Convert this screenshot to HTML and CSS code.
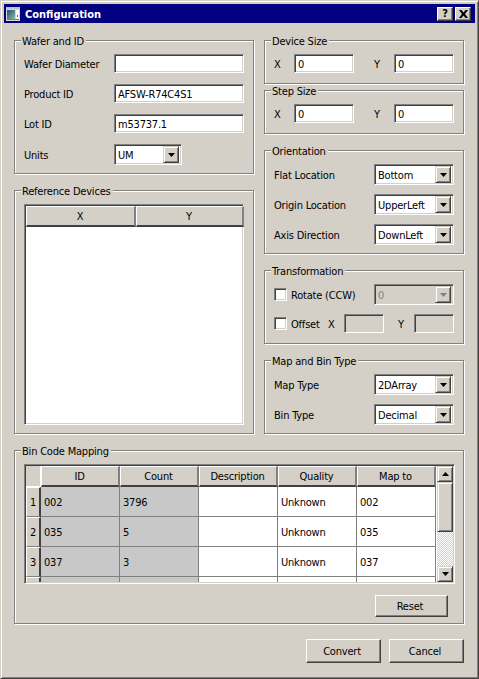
FILE: index.html
```html
<!DOCTYPE html>
<html lang="en">
<head>
<meta charset="utf-8">
<title>Configuration</title>
<link rel="stylesheet" href="styles.css">
</head>
<body>
<div class="window">
  <header class="titlebar">
    <svg class="app-icon" width="14" height="14" viewBox="0 0 14 14"><defs><linearGradient id="pic" x1="0" y1="0" x2="1" y2="1"><stop offset="0" stop-color="#1f4f72"/><stop offset="1" stop-color="#8fb8a8"/></linearGradient></defs><rect width="14" height="14" fill="#d8d8d8"/><rect x="0" y="0" width="14" height="2" fill="#b8c4cc"/><rect x="1" y="3" width="8" height="9" fill="url(#pic)"/><rect x="10" y="3" width="3" height="9" fill="#fff"/><rect x="11" y="8" width="1" height="2" fill="#3d7a50"/><rect x="1" y="12" width="12" height="1" fill="#808080"/></svg>
    <span class="title-text">Configuration</span>
    <span class="title-btn">?</span>
    <span class="title-btn title-close"><svg width="9" height="8" viewBox="0 0 9 8"><path d="M0 0h2.500l2 2.500 2-2.500H9L6 4l3 4H6.500l-2-2.500-2 2.500H0l3-4z" fill="#000"/></svg></span>
  </header>
  <main class="content">
    <div class="columns">
      <div class="col col-left">
        <section class="group g-wafer">
          <h2 class="group-title">Wafer and ID</h2>
          <div class="form">
            <div class="row"><label class="label l-wide">Wafer Diameter</label><input class="field f-wide" value=""></div>
            <div class="row"><label class="label l-wide">Product ID</label><input class="field f-wide" value="AFSW-R74C4S1"></div>
            <div class="row"><label class="label l-wide">Lot ID</label><input class="field f-wide" value="m53737.1"></div>
            <div class="row"><label class="label l-wide">Units</label>
              <div class="combo c-units"><span class="combo-text">UM</span><span class="combo-btn"><svg width="7" height="4" viewBox="0 0 7 4"><path d="M0 0h7L3.500 4z"/></svg></span></div></div>
          </div>
        </section>
        <section class="group g-ref">
          <h2 class="group-title">Reference Devices</h2>
          <div class="ref-table">
            <div class="ref-head"><div class="hcell">X</div><div class="hcell">Y</div></div>
          </div>
        </section>
      </div>
      <div class="col col-right">
        <section class="group g-size">
          <h2 class="group-title">Device Size</h2>
          <div class="row"><label class="label l-xy">X</label><input class="field f-num" value="0"><label class="label l-xy l-y">Y</label><input class="field f-num" value="0"></div>
        </section>
        <section class="group g-size g-step">
          <h2 class="group-title">Step Size</h2>
          <div class="row"><label class="label l-xy">X</label><input class="field f-num" value="0"><label class="label l-xy l-y">Y</label><input class="field f-num" value="0"></div>
        </section>
        <section class="group g-orient">
          <h2 class="group-title">Orientation</h2>
          <div class="form form-combo">
            <div class="row"><label class="label l-mid">Flat Location</label><div class="combo c-std"><span class="combo-text">Bottom</span><span class="combo-btn"><svg width="7" height="4" viewBox="0 0 7 4"><path d="M0 0h7L3.500 4z"/></svg></span></div></div>
            <div class="row"><label class="label l-mid">Origin Location</label><div class="combo c-std"><span class="combo-text">UpperLeft</span><span class="combo-btn"><svg width="7" height="4" viewBox="0 0 7 4"><path d="M0 0h7L3.500 4z"/></svg></span></div></div>
            <div class="row"><label class="label l-mid">Axis Direction</label><div class="combo c-std"><span class="combo-text">DownLeft</span><span class="combo-btn"><svg width="7" height="4" viewBox="0 0 7 4"><path d="M0 0h7L3.500 4z"/></svg></span></div></div>
          </div>
        </section>
        <section class="group g-trans">
          <h2 class="group-title">Transformation</h2>
          <div class="trans-rows">
            <div class="row">
              <input type="checkbox" class="check"><label class="label l-rotate">Rotate (CCW)</label>
              <div class="combo c-std c-off"><span class="combo-text">0</span><span class="combo-btn"><svg width="7" height="4" viewBox="0 0 7 4"><path d="M0 0h7L3.500 4z"/></svg></span></div>
            </div>
            <div class="row">
              <input type="checkbox" class="check"><label class="label l-offset">Offset</label>
              <label class="label l-ox">X</label><input class="field f-off" disabled>
              <label class="label l-oy">Y</label><input class="field f-off" disabled>
            </div>
          </div>
        </section>
        <section class="group g-map">
          <h2 class="group-title">Map and Bin Type</h2>
          <div class="form form-combo">
            <div class="row"><label class="label l-mid">Map Type</label><div class="combo c-std"><span class="combo-text">2DArray</span><span class="combo-btn"><svg width="7" height="4" viewBox="0 0 7 4"><path d="M0 0h7L3.500 4z"/></svg></span></div></div>
            <div class="row"><label class="label l-mid">Bin Type</label><div class="combo c-std"><span class="combo-text">Decimal</span><span class="combo-btn"><svg width="7" height="4" viewBox="0 0 7 4"><path d="M0 0h7L3.500 4z"/></svg></span></div></div>
          </div>
        </section>
      </div>
    </div>
    <section class="group g-bin">
      <h2 class="group-title">Bin Code Mapping</h2>
      <div class="bin-table">
        <div class="bin-grid">
          <div class="corner"></div><div class="hcell">ID</div><div class="hcell">Count</div><div class="hcell">Description</div><div class="hcell">Quality</div><div class="hcell">Map to</div>
          <div class="rowhead">1</div><div class="cell sel">002</div><div class="cell sel">3796</div><div class="cell"></div><div class="cell">Unknown</div><div class="cell">002</div>
          <div class="rowhead">2</div><div class="cell sel">035</div><div class="cell sel">5</div><div class="cell"></div><div class="cell">Unknown</div><div class="cell">035</div>
          <div class="rowhead">3</div><div class="cell sel">037</div><div class="cell sel">3</div><div class="cell"></div><div class="cell">Unknown</div><div class="cell">037</div>
          <div class="rowhead"></div><div class="cell sel"></div><div class="cell sel"></div><div class="cell"></div><div class="cell"></div><div class="cell"></div>
        </div>
        <div class="scrollbar">
          <span class="sb-btn"><svg width="7" height="4" viewBox="0 0 7 4"><path d="M0 4h7L3.500 0z"/></svg></span>
          <span class="sb-thumb"></span>
          <span class="sb-track"></span>
          <span class="sb-btn"><svg width="7" height="4" viewBox="0 0 7 4"><path d="M0 0h7L3.500 4z"/></svg></span>
        </div>
      </div>
      <div class="bin-actions"><button class="btn btn-reset">Reset</button></div>
    </section>
    <footer class="footer">
      <button class="btn btn-main">Convert</button>
      <button class="btn btn-main">Cancel</button>
    </footer>
  </main>
</div>
</body>
</html>
```
FILE: styles.css
```css
* { box-sizing: border-box; }
html, body { margin: 0; padding: 0; }
body {
  width: 479px;
  height: 679px;
  overflow: hidden;
  background: #d4d0c8;
  color: #000;
  font-family: "DejaVu Sans Condensed", "DejaVu Sans", sans-serif;
  font-stretch: condensed;
  font-size: 11px;
  line-height: 14px;
  letter-spacing: -0.2px;
}
.window {
  width: 479px;
  height: 679px;
  padding: 3px;
  background: #d4d0c8;
  border: 1px solid;
  border-color: #d4d0c8 #404040 #404040 #d4d0c8;
  box-shadow: inset 1px 1px 0 #fff, inset -1px -1px 0 #808080;
}
.titlebar {
  display: flex;
  align-items: center;
  height: 19px;
  padding: 0 4px 0 2px;
  background: #000080;
  color: #fff;
}
.app-icon { flex: none; }
.title-text { flex: 1; margin-left: 5px; padding-top: 2px; font-weight: bold; font-size: 11px; letter-spacing: 0; }
.title-btn {
  display: flex;
  align-items: center;
  justify-content: center;
  width: 16px;
  height: 14px;
  background: #d4d0c8;
  color: #000;
  font-weight: bold;
  font-size: 11px;
  border: 1px solid;
  border-color: #fff #404040 #404040 #fff;
  box-shadow: inset -1px -1px 0 #808080;
}
.title-close { margin-left: 2px; }
.content { padding: 17px 11px 0 10px; }
.columns { display: grid; grid-template-columns: 240px 200px; column-gap: 10px; }
.col { display: flex; flex-direction: column; gap: 16px; }
.group {
  position: relative;
  border: 1px solid #808080;
  box-shadow: inset 1px 1px 0 #fff, 1px 1px 0 #fff;
  padding: 13px 9px 0;
}
.group-title {
  position: absolute;
  top: -5px;
  left: 6px;
  margin: 0;
  padding: 0 2px 0 1px;
  background: #d4d0c8;
  font-size: 11px;
  font-weight: normal;
  line-height: 12px;
}
.g-wafer { height: 134px; }
.g-ref { height: 244px; }
.g-size { height: 44px; }
.g-step { margin-top: -10px; }
.g-orient { height: 104px; }
.g-trans { height: 74px; }
.g-map { height: 74px; }
.g-bin { height: 174px; margin-top: 16px; }
.form { display: flex; flex-direction: column; gap: 11px; }
.form-combo { gap: 9px; }
.row { display: flex; align-items: center; }
.label { flex: none; padding-top: 2px; }
.l-wide { width: 90px; }
.l-mid { width: 100px; }
.l-xy { width: 20px; }
.l-y { margin-left: 20px; }
.l-rotate { width: 83px; margin-left: 4px; }
.l-offset { width: 37px; margin-left: 4px; }
.l-ox { width: 16px; }
.l-oy { width: 16px; margin-left: 14px; }
.field {
  display: block;
  height: 19px;
  padding: 2px 0 0 3px;
  margin: 0;
  background: #fff;
  color: #000;
  font: inherit;
  letter-spacing: inherit;
  border: 1px solid;
  border-color: #808080 #fff #fff #808080;
  box-shadow: inset 1px 1px 0 #404040, inset -1px -1px 0 #d4d0c8;
  outline: none;
}
.f-wide { width: 130px; }
.f-num { width: 60px; }
.f-off { width: 40px; background: #d4d0c8; }
.combo {
  display: flex;
  align-items: center;
  height: 21px;
  padding: 2px;
  background: #fff;
  border: 1px solid;
  border-color: #808080 #fff #fff #808080;
  box-shadow: inset 1px 1px 0 #404040, inset -1px -1px 0 #d4d0c8;
}
.c-units { width: 68px; }
.c-std { width: 80px; }
.combo-text { flex: 1; padding: 2px 0 0 1px; white-space: nowrap; }
.combo-btn {
  flex: none;
  display: flex;
  align-items: center;
  justify-content: center;
  width: 16px;
  height: 17px;
  background: #d4d0c8;
  border: 1px solid;
  border-color: #d4d0c8 #404040 #404040 #d4d0c8;
  box-shadow: inset 1px 1px 0 #fff, inset -1px -1px 0 #808080;
}
.c-off { background: #d4d0c8; color: #808080; }
.c-off svg { fill: #808080; }
.check {
  appearance: none;
  flex: none;
  display: block;
  width: 13px;
  height: 13px;
  margin: 0;
  background: #fff;
  border: 1px solid;
  border-color: #808080 #fff #fff #808080;
  box-shadow: inset 1px 1px 0 #404040, inset -1px -1px 0 #d4d0c8;
}
.trans-rows { display: flex; flex-direction: column; gap: 9px; }
.trans-rows .row { min-height: 21px; }
.trans-rows .row + .row { min-height: 19px; }
.ref-table {
  height: 221px;
  background: #fff;
  padding: 1px;
  border: 1px solid;
  border-color: #808080 #fff #fff #808080;
  box-shadow: inset 1px 1px 0 #404040, inset -1px -1px 0 #d4d0c8;
}
.ref-head { display: grid; grid-template-columns: 110px 108px; height: 21px; }
.hcell {
  display: flex;
  align-items: center;
  justify-content: center;
  height: 21px;
  padding: 1px 1px 0 0;
  background: #d4d0c8;
  border: 1px solid;
  border-color: #fff #808080 #404040 #fff;
  border-width: 1px 2px 2px 1px;
}
.bin-table {
  display: flex;
  width: 431px;
  height: 120px;
  padding: 1px;
  background: #fff;
  border: 1px solid;
  border-color: #808080 #fff #fff #808080;
  box-shadow: inset 1px 1px 0 #404040, inset -1px -1px 0 #d4d0c8;
}
.bin-grid {
  flex: none;
  display: grid;
  width: 410px;
  height: 116px;
  overflow: hidden;
  grid-template-columns: 15px 79px 79px 79px 79px 79px;
  grid-auto-rows: 30px;
  grid-template-rows: 21px;
}
.corner {
  background: #d4d0c8;
  border-right: 1px solid #fff;
  border-bottom: 1px solid #fff;
}
.rowhead {
  display: flex;
  align-items: center;
  justify-content: center;
  padding-top: 2px;
  background: #d4d0c8;
  border: 1px solid;
  border-color: #fff #404040 #808080 #fff;
  border-width: 1px 2px 1px 1px;
}
.cell {
  display: flex;
  align-items: center;
  padding: 2px 0 0 3px;
  background: #fff;
  border-right: 1px solid #808080;
  border-bottom: 1px solid #808080;
}
.sel { background: #c8c8c8; }
.scrollbar { flex: none; display: flex; flex-direction: column; width: 16px; height: 116px; margin-left: 1px; }
.sb-btn {
  flex: none;
  display: flex;
  align-items: center;
  justify-content: center;
  height: 16px;
  background: #d4d0c8;
  border: 1px solid;
  border-color: #d4d0c8 #404040 #404040 #d4d0c8;
  box-shadow: inset 1px 1px 0 #fff, inset -1px -1px 0 #808080;
}
.sb-thumb {
  flex: none;
  height: 50px;
  background: #d4d0c8;
  border: 1px solid;
  border-color: #d4d0c8 #404040 #404040 #d4d0c8;
  box-shadow: inset 1px 1px 0 #fff, inset -1px -1px 0 #808080;
}
.sb-track {
  flex: 1;
  background: conic-gradient(#fff 25%, #d4d0c8 0 50%, #fff 0 75%, #d4d0c8 0) 0 0 / 2px 2px;
}
.bin-actions { display: flex; justify-content: flex-end; margin-top: 11px; padding-right: 6px; }
.btn {
  display: block;
  margin: 0;
  padding: 1px 3px 0 0;
  background: #d4d0c8;
  color: #000;
  font: inherit;
  letter-spacing: inherit;
  border: 1px solid;
  border-color: #fff #404040 #404040 #fff;
  box-shadow: inset -1px -1px 0 #808080;
}
.btn-reset { width: 73px; height: 22px; }
.btn-main { width: 75px; height: 24px; }
.footer { display: flex; justify-content: flex-end; gap: 8px; margin-top: 15px; }
```
